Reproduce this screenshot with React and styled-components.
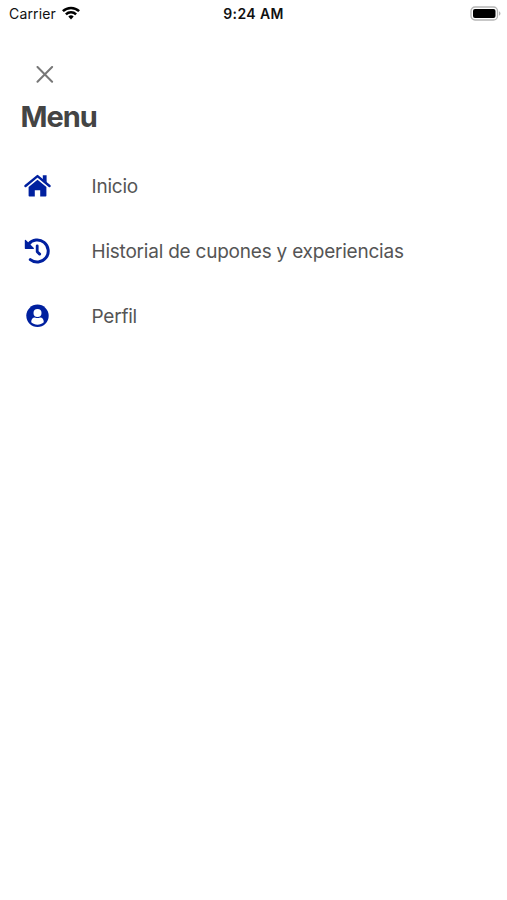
import styled, { createGlobalStyle } from 'styled-components';

const GlobalStyle = createGlobalStyle`
  * {
    box-sizing: border-box;
  }

  body {
    margin: 0;
    background-color: #fff;
    font-family: Inter, 'Liberation Sans', sans-serif;
  }
`;

const Screen = styled.main`
  width: 100%;
  min-height: 100vh;
  background-color: #fff;
`;

const StatusBar = styled.header`
  display: grid;
  grid-template-columns: 1fr auto 1fr;
  align-items: center;
  height: 26px;
  padding: 0 6px 0 9px;
  color: #111;
  font-size: 14px;
`;

const Carrier = styled.div`
  display: flex;
  align-items: center;
  gap: 6px;
  letter-spacing: 0.15px;
`;

const WifiIcon = styled.svg`
  width: 18px;
  height: 14px;
`;

const Time = styled.time`
  margin-right: 3px;
  font-weight: 600;
  letter-spacing: 0.4px;
`;

const BatteryIcon = styled.svg`
  justify-self: end;
  width: 31px;
  height: 15px;
`;

const CloseButton = styled.button`
  display: block;
  width: 18px;
  height: 18px;
  margin: 40px 0 0 36px;
  padding: 0;
  border: 0;
  background: none;

  svg {
    display: block;
  }
`;

const Title = styled.h1`
  margin: 15px 0 0 20.5px;
  color: #444;
  font-size: 29px;
  font-weight: 700;
  line-height: 36px;
  letter-spacing: -1px;
`;

const MenuList = styled.ul`
  margin: 18px 0 0;
  padding: 0 24px;
  list-style: none;
`;

const MenuItem = styled.li`
  display: flex;
  align-items: center;
  height: 65px;
  color: #555;
  font-size: 19px;
`;

const IconBox = styled.span`
  display: flex;
  justify-content: center;
  width: 27px;
  margin-right: 40.5px;
  color: #00209f;

  svg {
    width: ${props => props.$width}px;
    height: ${props => props.$height}px;
  }
`;

const Label = styled.span`
  padding-top: 1px;
  letter-spacing: -0.22px;
`;

function HomeIcon() {
  return (
    <svg viewBox="0 0 27 23" fill="currentColor">
      <path d="M18.8 1.2h3.8v7.5l-3.8-3.2z" />
      <path d="M1.5 12L13.5 2.1 25.5 12" fill="none" stroke="currentColor" strokeWidth="2.4" strokeLinecap="round" strokeLinejoin="round" />
      <path d="M4.6 13L13.5 5.7 22.4 13v8.7a.8.8 0 0 1-.8.8h-5.4v-6.3h-5.4v6.3H5.4a.8.8 0 0 1-.8-.8z" />
    </svg>
  );
}

function HistoryIcon() {
  return (
    <svg viewBox="0 0 27 26" fill="none" stroke="currentColor" strokeLinecap="round" strokeLinejoin="round">
      <path d="M6.3 21.6A11 11 0 1 0 4.6 6.2" strokeWidth="3" />
      <path d="M1.4 2.3v8h8z" fill="currentColor" strokeWidth="1.2" />
      <path d="M13.2 7.8v6l2.5 2.3" strokeWidth="2.8" />
    </svg>
  );
}

function ProfileIcon() {
  return (
    <svg viewBox="0 0 23 23">
      <circle cx="11.5" cy="11.8" r="11.2" fill="currentColor" />
      <circle cx="11.5" cy="8.9" r="4" fill="#fff" />
      <path d="M5.2 18.2c0-3.2 1.4-4.8 3.7-4.8 1.6.7 3.6.7 5.2 0 2.3 0 3.7 1.6 3.7 4.8-3.3 3.3-9.3 3.3-12.6 0z" fill="#fff" />
    </svg>
  );
}

const menuItems = [
  { label: 'Inicio', icon: HomeIcon, width: 27, height: 23 },
  { label: 'Historial de cupones y experiencias', icon: HistoryIcon, width: 27, height: 26 },
  { label: 'Perfil', icon: ProfileIcon, width: 23, height: 23 },
];

function App() {
  return (
    <>
      <GlobalStyle />
      <Screen>
        <StatusBar>
          <Carrier>
            <span>Carrier</span>
            <WifiIcon viewBox="0 0 18 14" fill="none" stroke="#000" strokeWidth="2.5">
              <path d="M.9 5.2a11.6 11.6 0 0 1 16.2 0" />
              <path d="M3.9 8.4a7.3 7.3 0 0 1 10.2 0" />
              <path d="M6.3 10.6a3.9 3.9 0 0 1 5.4 0L9 13.4z" fill="#000" stroke="none" />
            </WifiIcon>
          </Carrier>
          <Time>9:24 AM</Time>
          <BatteryIcon viewBox="0 0 31 15">
            <rect x="1" y="1" width="26.5" height="13" rx="4" fill="#fff" stroke="#b5b5b5" strokeWidth="1.3" />
            <rect x="3" y="3" width="22.5" height="9" rx="2" fill="#000" />
            <path d="M29 5.3c2 .8 2 3.6 0 4.4z" fill="#b5b5b5" />
          </BatteryIcon>
        </StatusBar>

        <CloseButton aria-label="Cerrar">
          <svg width="18" height="18" viewBox="0 0 18 18" fill="none" stroke="#777" strokeWidth="2" strokeLinecap="round">
            <path d="M1.5 1l14.6 14.7M16.1 1L1.5 15.7" />
          </svg>
        </CloseButton>
        <Title>Menu</Title>

        <nav>
          <MenuList>
            {menuItems.map(({ label, icon: Icon, width, height }) => (
              <MenuItem key={label}>
                <IconBox $width={width} $height={height}>
                  <Icon />
                </IconBox>
                <Label>{label}</Label>
              </MenuItem>
            ))}
          </MenuList>
        </nav>
      </Screen>
    </>
  );
}

export default App;
